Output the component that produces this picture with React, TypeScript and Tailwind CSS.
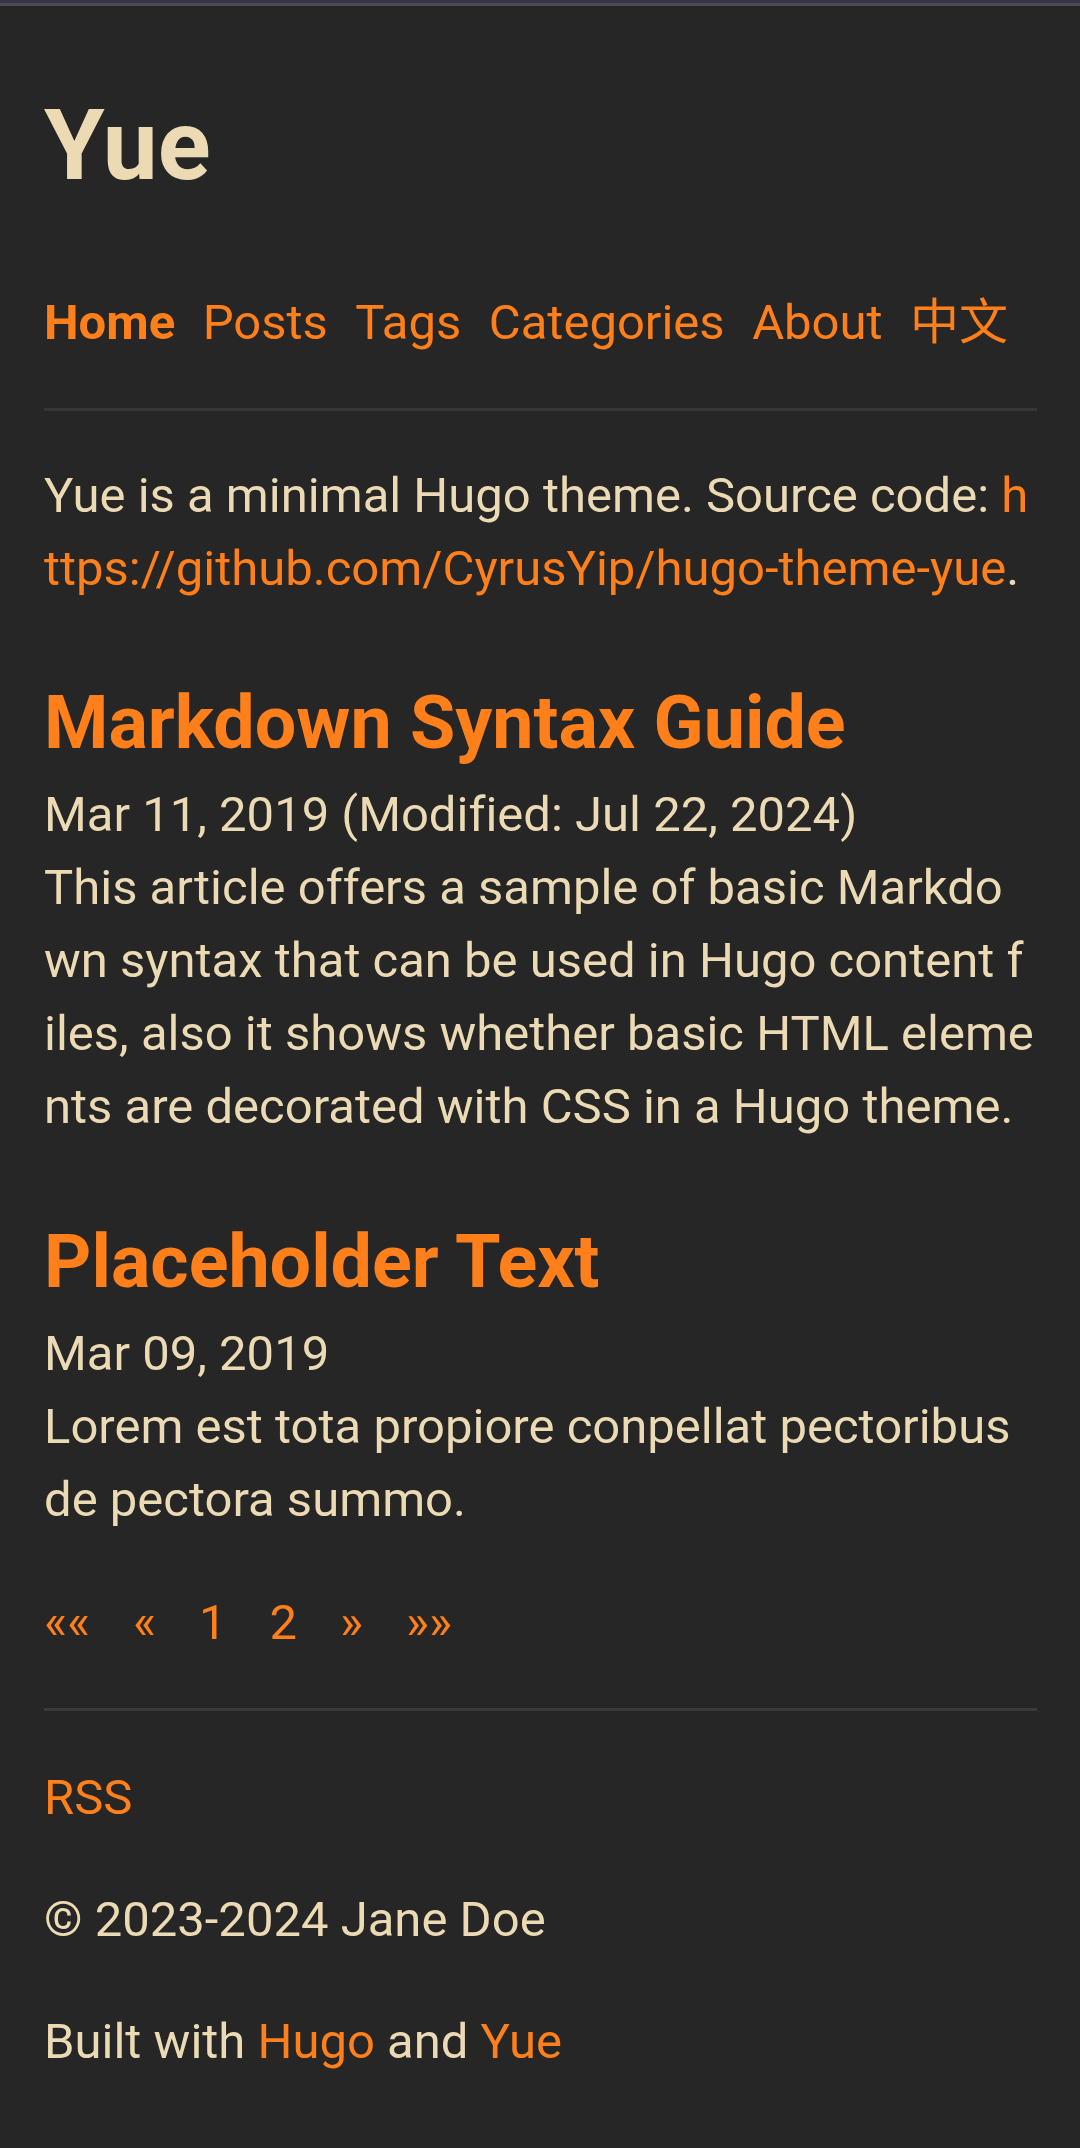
import React from "react"

const navItems = [
  { label: "Home", active: true },
  { label: "Posts" },
  { label: "Tags" },
  { label: "Categories" },
  { label: "About" },
  { label: "中文" },
]

type Post = {
  title: string
  date: string
  summary: string
  first?: boolean
}

// the "f / iles" wrap of the original comes from its font metrics, keep it explicit
const posts: Post[] = [
  {
    title: "Markdown Syntax Guide",
    date: "Mar 11, 2019 (Modified: Jul 22, 2024)",
    summary:
      "This article offers a sample of basic Markdown syntax that can be used in Hugo content f\niles, also it shows whether basic HTML elements are decorated with CSS in a Hugo theme.",
    first: true,
  },
  {
    title: "Placeholder Text",
    date: "Mar 09, 2019",
    summary: "Lorem est tota propiore conpellat pectoribus de pectora summo.",
  },
]

function PostItem({ post }: { post: Post }) {
  return (
    <section>
      <h2
        className={`${post.first ? "mt-[63px]" : "mt-[64px]"} text-[73.6px] font-bold leading-[110px] text-[#ff7f1a]`}
      >
        <a href="#">{post.title}</a>
      </h2>
      <div>{post.date}</div>
      <p className="whitespace-pre-line">{post.summary}</p>
    </section>
  )
}

export default function App() {
  return (
    <div
      className="min-h-[2148px] bg-[#262626] text-[49px] leading-[73px] text-[#ebdab4] break-all [font-variant-ligatures:none]"
      style={{ fontFamily: "Roboto, 'Noto Sans CJK SC', sans-serif" }}
    >
      {/* browser chrome strip */}
      <div className="h-[3px] bg-[#373543]" />
      <div className="h-[3px] bg-[#4b4958]" />

      <div className="pl-[44px] pr-[43px]">
        <header>
          <h1 className="mt-[81px] text-[98px] font-bold leading-[117px] text-[#ebdab4]">Yue</h1>
          <nav className="mt-[82px] flex gap-[27.5px] text-[#ff7f1a]">
            {navItems.map((item) => (
              <a key={item.label} href="#" className={item.active ? "font-bold" : ""}>
                {item.label}
              </a>
            ))}
          </nav>
          <hr className="mt-[49px] h-[3px] border-0 bg-[#3a3531]" />
        </header>

        <main>
          <p className="mt-[48px]">
            Yue is a minimal Hugo theme. Source code:{" "}
            <a href="#" className="text-[#ff7f1a]">
              https://github.com/CyrusYip/hugo-theme-yue
            </a>
            .
          </p>

          {posts.map((p) => (
            <PostItem key={p.title} post={p} />
          ))}

          <nav className="mt-[50px] flex gap-[43px] text-[#ff7f1a]">
            <a href="#">««</a>
            <a href="#">«</a>
            <a href="#">1</a>
            <a href="#">2</a>
            <a href="#">»</a>
            <a href="#">»»</a>
          </nav>
        </main>

        <footer>
          <hr className="mt-[49px] h-[3px] border-0 bg-[#3b3a39]" />
          <p className="mt-[50px]">
            <a href="#" className="text-[#ff7f1a]">
              RSS
            </a>
          </p>
          <p className="mt-[49px]">© 2023-2024 Jane Doe</p>
          <p className="mt-[49px]">
            Built with{" "}
            <a href="#" className="text-[#ff7f1a]">
              Hugo
            </a>{" "}
            and{" "}
            <a href="#" className="text-[#ff7f1a]">
              Yue
            </a>
          </p>
        </footer>
      </div>
    </div>
  )
}
